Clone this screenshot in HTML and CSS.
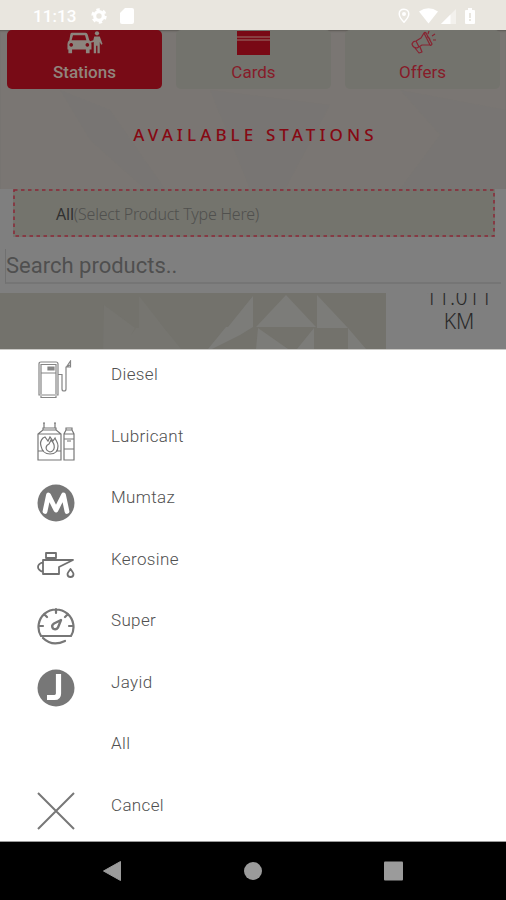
FILE: index.html
```html
<!DOCTYPE html>
<html lang="en">
<head>
<meta charset="utf-8">
<meta name="viewport" content="width=device-width, initial-scale=1">
<title>Available Stations</title>
<link rel="stylesheet" href="styles.css">
</head>
<body>
<div class="phone">
  <header class="status">
    <span class="time">11:13</span>
    <svg class="gear" viewBox="0 0 16 16"><circle cx="8" cy="8" r="4.3" fill="none" stroke="#fff" stroke-width="3.2"/><circle cx="8" cy="8" r="6.5" fill="none" stroke="#fff" stroke-width="2.4" stroke-dasharray="3.4 3.4"/></svg>
    <svg class="sd" viewBox="0 0 14 16"><path d="M5 0h7q2 0 2 2v12q0 2-2 2H2q-2 0-2-2V5z" fill="#fff"/></svg>
    <span class="grow"></span>
    <svg class="pin" viewBox="0 0 12 16"><path d="M6 1.2C3 1.2 1.2 3.3 1.2 6c0 3.2 4.8 8.3 4.8 8.3S10.800 9.200 10.800 6C10.800 3.300 9 1.200 6 1.200z" fill="none" stroke="#fff" stroke-width="1.400"/><circle cx="6" cy="6" r="2" fill="#fff"/></svg>
    <svg class="wifi" viewBox="0 0 19 16"><path d="M0 3.500Q9.500-3 19 3.500L9.500 15.500z" fill="#fff"/></svg>
    <svg class="signal" viewBox="0 0 15 15"><path d="M15 0v15H0z" fill="#fff" opacity=".45"/><path d="M9.500 5.500V15H0z" fill="#fff"/></svg>
    <svg class="battery" viewBox="0 0 10 16"><path d="M3 0h4v2h2q1 0 1 1v12q0 1-1 1H1q-1 0-1-1V3q0-1 1-1h2z" fill="#fff"/><path d="M4 5h2v5H4zM4 11h2v2H4z" fill="#e9e6df"/></svg>
  </header>

  <section class="hero">
    <svg class="facets" viewBox="0 0 506 159" preserveAspectRatio="none"><path d="M60 60L110 80 165 159H145L90 110zM210 60L330 75 285 159H250zM400 60L506 80V159H400L440 105z" fill="#757572" opacity=".35"/></svg>
    <nav class="tabs">
      <div class="tab active">
        <svg class="car" viewBox="0 0 40 26"><g fill="#8c857e"><path fill-rule="evenodd" d="M5.500 2h15q2 0 2.500 2l1.700 6q2.300 1 2.300 4v6h-2v4h-4v-4H6v4H2v-4H1v-6q0-3 2-4l1-6q.300-2 1.500-2zM7 4.500L5.500 10h16L20 4.500zM5 13a2 2 0 1 0 .1 0zM22.500 13a2 2 0 1 0 .1 0z"/><circle cx="33" cy="2.500" r="2.300"/><path d="M30 6h6l3 8-1.500 1L36 12v12h-2.500v-8H32v8h-2.500V12l-4 1v-2l3.500-1z"/></g></svg>
        <span>Stations</span>
      </div>
      <div class="tab">
        <svg class="card" viewBox="0 0 33 24"><path d="M0 0h33v24H0z" fill="#790915"/><path d="M0 6h33M0 9h33" stroke="#99766e" stroke-width="1"/></svg>
        <span>Cards</span>
      </div>
      <div class="tab">
        <svg class="horn" viewBox="0 0 26 24"><g fill="none" stroke="#882432" stroke-width="1.200" stroke-linejoin="round"><path d="M2 13q1-3 4-3l5-3 3-5 6 12-8 0-5 3q-4 0-5-4zM6 10l3 6M14 2q1-1 2 0l6 11q-1 2-2 1M5 17l4 5 3-1-2-5M17 6q3 0 3 4M18 3l1-3M22 5l3-2M23 9h3"/></g></svg>
        <span>Offers</span>
      </div>
    </nav>
    <h1>AVAILABLE STATIONS</h1>
  </section>

  <section class="filters">
    <div class="select"><b>All</b>(Select Product Type Here)
      <svg class="outline" viewBox="0 0 482 48"><rect x="1" y="1" width="480" height="46"/></svg>
    </div>
    <div class="search">Search products..</div>
  </section>

  <section class="station">
    <svg class="pattern" viewBox="0 0 386 56"><path d="M0 0h386v56H0z" fill="#73726c"/><g fill="#7c7c79"><path d="M256 34L286 2l30 32zM317 2l31 33h-31zM258 35l30 21h-32zM314 35v21h-17zM348 35l18 21h-18zM253 3v31h-25zM226 34h27l-13 8-28 14h-4z"/><path d="M104 12l31 23-12 21h-20zM139 3l25 32h-25zM136 35h28l17 21h-60z" opacity=".35"/></g></svg>
    <div class="distance"><span>11.011</span><span>KM</span></div>
  </section>

  <main class="sheet">
    <div class="row">
      <svg viewBox="0 0 40 40"><g fill="none" stroke="#858585" stroke-width="1.200"><path d="M3 4q0-2 2-2h15q2 0 2 2v31H3zM5 4.500h15V13H5zM5 13v21M20 13v21M5 36v1.500h15V36M22 14.500h4V29q0 2 2 2t2-2V7l4-2M34.500 1v6h-4z"/><path d="M12 7h6v3h-6z" fill="#888"/></g></svg>
      <span>Diesel</span>
    </div>
    <div class="row">
      <svg viewBox="0 0 40 40"><g fill="none" stroke="#777" stroke-width="1.200"><path d="M8 1v5M19 1v5M7 1h2M18 1h2M7 6h13v2l5 4v26H2V12l5-4zM7 8h13M2 12h23M2 29h6M20 29h5M7 16c-2 2-3 5-2 8 1 5 4 8 9 8s8-3 8-8c0-4-2-5-3-8l-2 3-3-4-2 4-3-4zM14 30c-6-2-4-7-1-8l2-4c5 5 4 11-1 12zM28 38V12l2-4h6l2 4v26zM28 12h10M28 17h10M28 27h10M30 8V6h6v2M31 19h4"/></g></svg>
      <span>Lubricant</span>
    </div>
    <div class="row">
      <svg viewBox="0 0 40 40"><circle cx="20" cy="20" r="18.500" fill="#777"/><path d="M9 28.500L12.500 12 20 27 27.500 12 31 28.500" fill="none" stroke="#fff" stroke-width="4.800" stroke-linecap="round" stroke-linejoin="round"/></svg>
      <span>Mumtaz</span>
    </div>
    <div class="row">
      <svg viewBox="0 0 40 40"><g fill="none" stroke="#707070" stroke-width="1.800" stroke-linejoin="round"><path d="M7 15H37l-14 7v7H7zM10 8h10v5H10zM13 13v2M17 13v2M7 17q-5 2-5 5t5 5M34.500 24q-3 4-3 5a3 3 0 0 0 6 0q0-1-3-5z"/></g></svg>
      <span>Kerosine</span>
    </div>
    <div class="row">
      <svg viewBox="0 0 40 40"><g fill="none" stroke="#777" stroke-width="2.200" stroke-linecap="round"><path d="M5 30A17.500 17.500 0 1 1 35 30zM7 32Q16 41 29 35M20 3v4M8 8l3 3M32 8l-3 3M3 20h4M37 20h-4"/><path d="M25 14l-7 3.500q-3 2-1 5 3 2 5-1z" stroke-width="2.400" stroke-linejoin="round"/></g></svg>
      <span>Super</span>
    </div>
    <div class="row">
      <svg viewBox="0 0 40 40"><circle cx="20" cy="20" r="18.500" fill="#777"/><path d="M22.500 6v19.500q0 4-4 4h-7.500" fill="none" stroke="#fff" stroke-width="5.200"/></svg>
      <span>Jayid</span>
    </div>
    <div class="row"><i></i><span>All</span></div>
    <div class="row">
      <svg viewBox="0 0 40 40"><path d="M2 2l36 36M38 2L2 38" stroke="#777" stroke-width="2"/></svg>
      <span>Cancel</span>
    </div>
  </main>

  <footer class="navbar">
    <svg viewBox="0 0 22 22"><path d="M2.500 11L19.500 1.500v19z" fill="#9b9b9b" stroke="#9b9b9b" stroke-linejoin="round"/></svg>
    <svg viewBox="0 0 22 22"><circle cx="11" cy="11" r="9" fill="#9b9b9b"/></svg>
    <svg viewBox="0 0 22 22"><rect x="1" y="1.500" width="19" height="19" rx="1" fill="#9b9b9b"/></svg>
  </footer>
</div>
</body>
</html>
```
FILE: styles.css
```css
* { box-sizing: border-box; }
body { margin: 0; font-family: Roboto, "Liberation Sans", sans-serif; }
svg { display: block; flex: none; }
.phone { width: 506px; height: 900px; display: flex; flex-direction: column; overflow: hidden; background: #7f7f7f; }
.status { flex: none; height: 30px; background: #e9e6df; display: flex; align-items: center; padding: 2px 31px 0 33px; color: #fff; }
.time { width: 58px; font-size: 17px; font-weight: 500; letter-spacing: .1px; }
.gear { width: 16px; height: 16px; margin-right: 13px; }
.sd { width: 14px; height: 16px; }
.grow { flex: 1; }
.pin { width: 12px; height: 16px; margin-right: 9px; }
.wifi { width: 19px; height: 16px; margin-right: 3px; }
.signal { width: 15px; height: 15px; margin-right: 9px; }
.battery { width: 10px; height: 16px; }

.hero { flex: none; height: 159px; position: relative; background: #7a7673; box-shadow: inset 0 2px 2px -1px #5b5955; }
.facets { position: absolute; inset: 0; width: 506px; height: 159px; }
.tabs { position: relative; display: grid; grid-template-columns: repeat(3, 155px); gap: 14px; padding-left: 7px; }
.tab { height: 59px; display: flex; flex-direction: column; align-items: center; background: #73736d; border-radius: 5px; color: #871b29; font-size: 17px; line-height: 20px; }
.tab svg { height: 24px; margin-top: 1px; margin-bottom: 7px; }
.active { background: #780b16; color: #91857d; font-weight: 500; }
.car { width: 40px; }
.tab .card { width: 33px; }
.horn { width: 26px; }
h1 { position: relative; margin: 34px 0 0 5px; text-align: center; color: #860913; font: 500 17px/24px "Noto Sans", sans-serif; letter-spacing: 4.1px; }

.filters { flex: none; height: 104px; padding: 0 5px; }
.select { position: relative; width: 482px; height: 48px; margin-left: 8px; padding-left: 43px; background: #74746d; color: #50504e; font: 300 16px/51px "Noto Sans", sans-serif; letter-spacing: -.22px; white-space: nowrap; }
.select b { font-weight: 400; color: #303030; }
.outline { position: absolute; inset: 0; width: 482px; height: 48px; }
.outline rect { fill: none; stroke: #8a2737; stroke-width: 1.5; stroke-dasharray: 3.500 3.500; }
.search { height: 35px; margin-top: 12px; line-height: 34px; font-size: 22px; color: #4f4f4f; border-left: 1px solid #707070; border-bottom: 2px solid #757575; }

.station { flex: none; height: 56px; display: flex; }
.pattern { width: 386px; height: 56px; }
.distance { width: 120px; height: 56px; padding-left: 26px; overflow: hidden; display: flex; flex-direction: column; align-items: center; font: 300 21px/24px "Noto Sans", sans-serif; color: #292929; }
.distance span { flex: none; height: 24px; }
.distance span:first-child { margin-top: -8px; letter-spacing: .4px; }

.sheet { flex: none; height: 493px; background: #fff; border-top: 1px solid #cac9c6; border-bottom: 1px solid #9b9b9b; }
.row { height: 61.5px; display: flex; align-items: flex-start; padding: 10px 0 0 36px; }
.row svg, .row i { width: 40px; height: 40px; }
.row span { margin-left: 35px; margin-top: 3px; line-height: 22px; font-size: 17px; font-weight: 300; letter-spacing: .35px; color: #505050; }
.navbar { flex: none; height: 58px; background: #000; display: flex; justify-content: space-between; padding: 18px 101px 0; }
.navbar svg { width: 22px; height: 22px; }
```
